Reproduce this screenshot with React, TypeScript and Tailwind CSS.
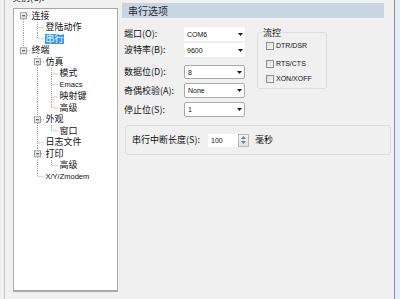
import React from "react";

type TreeRow = { cells: string[]; label: string; selected?: boolean; latin?: boolean };

const treeRows: TreeRow[] = [
  { cells: ["e-d"], label: "连接" },
  { cells: ["|", "t"], label: "登陆动作" },
  { cells: ["|", "L"], label: "串行", selected: true },
  { cells: ["e-u"], label: "终端" },
  { cells: ["b", "e-ud"], label: "仿真" },
  { cells: ["b", "|", "t"], label: "模式" },
  { cells: ["b", "|", "t"], label: "Emacs", latin: true },
  { cells: ["b", "|", "t"], label: "映射键" },
  { cells: ["b", "|", "L"], label: "高级" },
  { cells: ["b", "e-ud"], label: "外观" },
  { cells: ["b", "|", "L"], label: "窗口" },
  { cells: ["b", "t"], label: "日志文件" },
  { cells: ["b", "e-ud"], label: "打印" },
  { cells: ["b", "|", "L"], label: "高级" },
  { cells: ["b", "L"], label: "X/Y/Zmodem", latin: true },
];

// one 14px column of the tree's dotted connector lines
function TreeCell({ kind }: { kind: string }) {
  const x = 7.5;
  const mid = 5.75;
  const dot = { stroke: "#a3a3a3", strokeWidth: 1, strokeDasharray: "1 1" };
  const isExp = kind.startsWith("e");
  return (
    <svg width="14" height="11.5" viewBox="0 0 14 11.5" className="shrink-0 block">
      {kind === "|" && <line x1={x} y1={0} x2={x} y2={11.5} {...dot} />}
      {kind === "t" && (
        <>
          <line x1={x} y1={0} x2={x} y2={11.5} {...dot} />
          <line x1={x} y1={mid} x2={14} y2={mid} {...dot} />
        </>
      )}
      {kind === "L" && (
        <>
          <line x1={x} y1={0} x2={x} y2={mid} {...dot} />
          <line x1={x} y1={mid} x2={14} y2={mid} {...dot} />
        </>
      )}
      {isExp && (
        <>
          {kind.includes("u") && <line x1={x} y1={0} x2={x} y2={2.5} {...dot} />}
          {kind.includes("d") && <line x1={x} y1={9} x2={x} y2={11.5} {...dot} />}
          <line x1={11} y1={mid} x2={14} y2={mid} {...dot} />
          <defs>
            <linearGradient id="expg" x1="0" y1="0" x2="1" y2="1">
              <stop offset="0" stopColor="#ffffff" />
              <stop offset="1" stopColor="#d6d6d6" />
            </linearGradient>
          </defs>
          <rect x={4.5} y={2.75} width={6} height={6} fill="url(#expg)" stroke="#9c9c9c" strokeWidth={1} />
          <line x1={6} y1={mid} x2={9} y2={mid} stroke="#3a3a3a" strokeWidth={1} />
        </>
      )}
    </svg>
  );
}

function Arrow() {
  return (
    <svg width="5" height="3" viewBox="0 0 5 3" className="shrink-0">
      <polygon points="0,0 5,0 2.5,3" fill="#1a1a1a" />
    </svg>
  );
}

function Combo({ value, bordered }: { value: string; bordered?: boolean }) {
  return (
    <div
      className={`w-[61px] h-full flex items-center justify-between bg-white pl-[3px] pr-[2px] ${
        bordered ? "border border-[#a9a9a9] rounded-[2px]" : ""
      }`}
    >
      <span className="text-[7px] font-['Liberation_Sans',sans-serif] text-[#111] leading-none">{value}</span>
      <Arrow />
    </div>
  );
}

function CheckRow({ label }: { label: string }) {
  return (
    <div className="flex items-center h-[9px]">
      <div className="w-[8px] h-[8px] border border-[#8e8f8f] bg-gradient-to-br from-[#dcdcdc] to-[#f6f6f6]" />
      <span className="ml-[2px] text-[7px] font-['Liberation_Sans',sans-serif] leading-none text-[#111]">{label}</span>
    </div>
  );
}

export default function App() {
  return (
    <div className="w-[400px] h-[299px] bg-[#f0f0f0] flex overflow-hidden font-['Noto_Sans_CJK_SC',sans-serif] text-black">
      {/* category tree */}
      <div className="w-[118px] h-full pl-[4px] shrink-0">
        <div className="h-full border-l border-[#c6c6c6] pl-[8px] flex flex-col">
          <div className="h-[8px] overflow-hidden">
            <div className="-mt-[7px] -ml-[1px] text-[9px] leading-[10px] text-[#222]">类别(C):</div>
          </div>
          <div className="h-[284px] w-[105px] bg-white border border-[#a8a8a8] border-b-2 pl-[2px] pt-[1px]">
            {treeRows.map((row, i) => (
              <div key={i} className="flex h-[11.5px] items-center">
                {row.cells.map((c, j) => (
                  <TreeCell key={j} kind={c} />
                ))}
                <span
                  className={`ml-[1px] px-[0.5px] leading-[10.5px] whitespace-nowrap ${
                    row.latin ? "text-[7.5px] font-['Liberation_Sans',sans-serif]" : "text-[9px]"
                  } ${row.selected ? "bg-[#3399ff] text-white" : "text-[#111]"}`}
                >
                  {row.label}
                </span>
              </div>
            ))}
          </div>
        </div>
      </div>

      {/* serial options */}
      <div className="flex-1 h-full pl-[4px] pt-[3px]">
        <div className="w-[262px] h-[15px] bg-[#c8d5e3] pl-[6px] flex items-center text-[10px] text-[#2b2b2b]">
          串行选项
        </div>

        <div className="flex pl-[2px]">
          <div className="w-[121px] text-[9px] text-[#111]">
            <div className="flex items-center h-[14px] mt-[9px]">
              <span className="w-[60px]">端口(O):</span>
              <Combo value="COM6" />
            </div>
            <div className="flex items-center h-[14px] mt-[2px]">
              <span className="w-[60px]">波特率(B):</span>
              <Combo value="9600" />
            </div>
            <div className="flex items-center h-[14px] mt-[8px]">
              <span className="w-[60px]">数据位(D):</span>
              <Combo value="8" bordered />
            </div>
            <div className="flex items-center h-[15px] mt-[4px]">
              <span className="w-[60px]">奇偶校验(A):</span>
              <Combo value="None" bordered />
            </div>
            <div className="flex items-center h-[15px] mt-[4px]">
              <span className="w-[60px]">停止位(S):</span>
              <Combo value="1" bordered />
            </div>
          </div>

          <div className="ml-[12px] mt-[14px] w-[70px] h-[57px] border border-[#d5dfe5] rounded-[3px] pl-[8px]">
            <div className="-mt-[6px] -ml-[4px] w-fit px-[1px] bg-[#f0f0f0] text-[9px] leading-[11px] text-[#111]">流控</div>
            <div className="mt-[3px]">
              <CheckRow label="DTR/DSR" />
            </div>
            <div className="mt-[9px]">
              <CheckRow label="RTS/CTS" />
            </div>
            <div className="mt-[6px]">
              <CheckRow label="XON/XOFF" />
            </div>
          </div>
        </div>

        <div className="mt-[8px] ml-[3px] w-[266px] h-[30px] border border-[#dcdcdc] rounded-[3px] flex items-center pl-[6px] text-[9px] text-[#111]">
          <span className="w-[76px] whitespace-nowrap">串行中断长度(S):</span>
          <div className="w-[41px] h-[13px] flex bg-white">
            <span className="flex-1 pl-[3px] flex items-center text-[7px] font-['Liberation_Sans',sans-serif] leading-none">100</span>
            <div className="w-[11px] h-full border border-[#b9b9b9] bg-gradient-to-b from-[#f4f4f4] to-[#e1e1e1] flex flex-col items-center justify-around py-[1px]">
              <svg width="5" height="3" viewBox="0 0 5 3">
                <polygon points="2.5,0 5,3 0,3" fill="#6b7c8f" />
              </svg>
              <svg width="5" height="3" viewBox="0 0 5 3">
                <polygon points="0,0 5,0 2.5,3" fill="#6b7c8f" />
              </svg>
            </div>
          </div>
          <span className="ml-[6px]">毫秒</span>
        </div>
      </div>

      {/* window edge */}
      <div className="w-[6px] h-full shrink-0 border-l border-[#8d8d8d] bg-[#e2edf6]" />
    </div>
  );
}
